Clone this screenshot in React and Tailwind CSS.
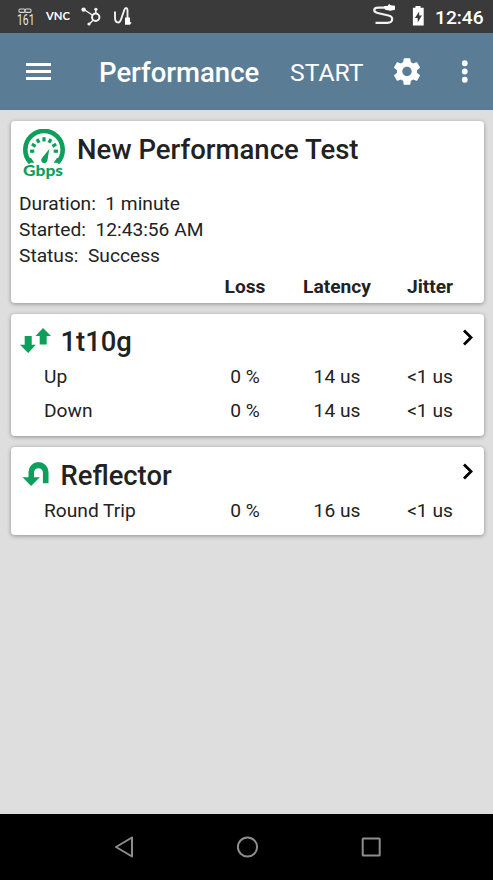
const GREEN = '#0d9f5b';

function StatusBar() {
  return (
    <div className="flex h-[33px] items-center bg-[#3a3a3a] pl-[16px] pr-[8px] text-white">
      <svg width="120" height="33" viewBox="0 0 120 33" fill="none">
        <g stroke="#d8d8d8" strokeWidth="1.1">
          <rect x="3" y="9" width="6" height="3.4" rx="1.2" />
          <rect x="9" y="9" width="6" height="3.4" rx="1.2" />
        </g>
        <text x="1" y="25" fontSize="14.5" fill="#e6e6e6" fontFamily="Roboto, sans-serif" fontWeight="400" textLength="17.5" lengthAdjust="spacingAndGlyphs">161</text>
        <text x="30" y="19.5" fontSize="11.5" fill="#ffffff" fontFamily="Lato, sans-serif" fontWeight="700" textLength="24" lengthAdjust="spacingAndGlyphs">VNC</text>
        <g stroke="#f2f2f2">
          <circle cx="79.7" cy="17.3" r="3.7" strokeWidth="2" />
          <path d="M68 9.5 77 15.5M79.8 9v5M76.8 20.5l-3.3 3.2" strokeWidth="1.5" />
        </g>
        <g fill="#f2f2f2">
          <circle cx="67.6" cy="9.6" r="2.2" />
          <circle cx="79.9" cy="9.3" r="1.6" />
          <circle cx="73" cy="24" r="1.6" />
        </g>
        <path d="M99 11.500v6c0 6 4.500 6.500 6 2l3.300-9.500c1-2.800 3.200-2.500 3.200.5V18" stroke="#f2f2f2" strokeWidth="1.9" />
        <path d="M109 17.500h5v4.500l1.600.5-1.600 2.300h-5z" fill="#fff" />
      </svg>
      <div className="grow" />
      <svg width="56" height="33" viewBox="0 0 56 33" fill="none">
        <path d="M17 7.700H6.500c-5.500 0-5.500 4.300-1 5.300l11 2.500c5.500 1.300 4.500 7.300-1 7.300H3.500" stroke="#f2f2f2" strokeWidth="2.200" />
        <path d="M12 6h3.500l1.500-2 1.700 1.300 4.300.5v4l-4.500.9-5.500-1z" fill="#fff" />
        <path d="M43.500 6h5v1.800h3.200v17.700H40.900V7.800h2.600z" fill="#fff" />
        <path d="M47.200 11.500 42.900 18h2.800v4.500l4.200-7h-2.700z" fill="#3a3a3a" />
      </svg>
      <span className="ml-[7px] mt-[2px] w-[50px] whitespace-nowrap text-[19.2px] font-medium leading-none">12:46</span>
    </div>
  );
}

function AppBar() {
  return (
    <header className="flex h-[77px] items-center bg-[#5b7c95] text-white">
      <div className="ml-[26px] flex w-[25px] flex-col gap-[4px]">
        <span className="h-[3px] bg-white" />
        <span className="h-[3px] bg-white" />
        <span className="h-[3px] bg-white" />
      </div>
      <h1 className="ml-[48px] mt-[3px] w-[191px] whitespace-nowrap text-[27.5px] font-medium leading-none">Performance</h1>
      <span className="mt-[3px] w-[101px] whitespace-nowrap text-[24.66px] leading-none">START</span>
      <svg width="32" height="33" viewBox="0 0 24 24" fill="currentColor">
        <path d="M19.43 12.98c.04-.32.07-.64.07-.98s-.03-.66-.07-.98l2.11-1.65c.19-.15.24-.42.12-.64l-2-3.46c-.12-.22-.39-.3-.61-.22l-2.49 1c-.52-.4-1.08-.73-1.69-.98l-.38-2.65C14.46 2.18 14.25 2 14 2h-4c-.25 0-.46.18-.49.42l-.38 2.65c-.61.25-1.17.59-1.69.98l-2.49-1c-.23-.09-.49 0-.61.22l-2 3.46c-.13.22-.07.49.12.64l2.11 1.65c-.04.32-.07.65-.07.98s.03.66.07.98l-2.11 1.65c-.19.15-.24.42-.12.64l2 3.46c.12.22.39.3.61.22l2.49-1c.52.4 1.08.73 1.69.98l.38 2.65c.03.24.24.42.49.42h4c.25 0 .46-.18.49-.42l.38-2.65c.61-.25 1.17-.59 1.69-.98l2.49 1c.23.09.49 0 .61-.22l2-3.46c.12-.22.07-.49-.12-.64zM12 15.5c-1.93 0-3.5-1.57-3.5-3.5s1.57-3.5 3.5-3.5 3.5 1.57 3.5 3.5-1.57 3.5-3.5 3.5z" />
      </svg>
      <svg className="ml-[25px]" width="33" height="33" viewBox="0 0 24 24" fill="currentColor">
        <circle cx="12.2" cy="6" r="2.1" />
        <circle cx="12.2" cy="12" r="2.1" />
        <circle cx="12.2" cy="18" r="2.1" />
      </svg>
    </header>
  );
}

function GaugeIcon() {
  return (
    <svg className="mt-[10px]" width="44" height="52" viewBox="0 0 44 52" fill="none">
      <path d="M8.600 34A18.700 18.700 0 1 1 35.400 34" transform="translate(0 -.3)" stroke={GREEN} strokeWidth="4.600" />
      <path d="M3.500 29 6 33.800h6.400L9 29zM40.500 29 38 33.800h-6.400L35 29z" fill={GREEN} />
      <g stroke={GREEN} strokeWidth="3.200">
        <path d="M8 22.200h4.300" />
        <path d="M8 22.200h4.300" transform="rotate(30 22 22.200)" />
        <path d="M8 22.200h4.300" transform="rotate(60 22 22.200)" />
        <path d="M8 22.200h4.300" transform="rotate(90 22 22.200)" />
        <path d="M8 22.200h4.300" transform="rotate(120 22 22.200)" />
        <path d="M8 22.200h4.300" transform="rotate(150 22 22.200)" />
        <path d="M8 22.200h4.300" transform="rotate(180 22 22.200)" />
      </g>
      <path d="M27.300 20 25.400 31.500a3.100 3.100 0 1 1-5.600-2.200z" fill={GREEN} />
      <text x="1" y="46.800" fontSize="15.800" fontWeight="900" fill={GREEN} fontFamily="Lato, sans-serif" textLength="40" lengthAdjust="spacingAndGlyphs">Gbps</text>
    </svg>
  );
}

function UpDownIcon() {
  return (
    <svg className="-mt-[4px] -ml-px mr-px" width="31" height="25" viewBox="0 0 31 25" fill={GREEN}>
      <path d="M4.7 8h7v8.700h4.100L8.200 25 0 16.700h4.700z" />
      <path d="M23 0l8 8h-4.300v8.500h-7V8h-4.200z" />
    </svg>
  );
}

function LoopIcon() {
  return (
    <svg className="-mt-[2px] -ml-px mr-px" width="31" height="25" viewBox="0 0 31 25">
      <path d="M2.500 15.200h6V10a10 10 0 0 1 20 0v11.300h-5.600V10a4.500 4.500 0 0 0-8.900 0v5.200h5.800L11.100 24z" fill={GREEN} />
    </svg>
  );
}

function Card({ children, className = '' }) {
  return (
    <section className={`rounded-[4px] bg-white shadow-[0_1px_4px_rgba(0,0,0,0.36)] ${className}`}>
      {children}
    </section>
  );
}

function Row({ label, cells, className = '' }) {
  return (
    <div className={`grid grid-cols-[1fr_92px_92px_94px] items-center pl-[33px] pr-[7px] text-center ${className}`}>
      <span className="text-left">{label}</span>
      {cells.map((c, i) => (
        <span key={i} className="whitespace-nowrap">{c}</span>
      ))}
    </div>
  );
}

function ResultCard({ icon, title, rows, className }) {
  return (
    <Card className={className}>
      <div className="flex h-[37px] items-center pl-[10px] pr-[11px]">
        {icon}
        <h2 className="ml-[8.5px] mt-[1px] grow text-[27.4px] font-medium leading-[37px]">{title}</h2>
        <svg className="-mt-[9px]" width="11" height="17" viewBox="0 0 11 17" fill="none">
          <path d="M2 1.5 9 8.500l-7 7" stroke="#000" strokeWidth="2.800" />
        </svg>
      </div>
      {rows.map((r) => (
        <Row key={r[0]} label={r[0]} cells={r.slice(1)} className="h-[34px]" />
      ))}
    </Card>
  );
}

export default function App() {
  return (
    <div className="flex h-[880px] w-[493px] flex-col overflow-hidden bg-[#dedede] font-[Roboto,sans-serif] text-[19.18px] text-[#222]">
      <StatusBar />
      <AppBar />
      <main className="flex grow flex-col pl-[11px] pr-[9px] pt-[11px]">
        <Card className="h-[181.5px]">
          <div className="flex h-[57px] items-center pl-[11px]">
            <GaugeIcon />
            <h2 className="ml-[11px] mt-[1px] whitespace-nowrap text-[27.5px] font-medium leading-none">New Performance Test</h2>
          </div>
          <div className="whitespace-pre pl-[8px] pt-[13px] leading-[26.2px]">
            <p>{'Duration:  1 minute'}</p>
            <p>{'Started:  12:43:56 AM'}</p>
            <p>{'Status:  Success'}</p>
          </div>
          <Row label="" cells={['Loss', 'Latency', 'Jitter']} className="mt-[1.4px] h-[32px] font-bold" />
        </Card>
        <ResultCard
          className="mt-[11px] h-[122.5px] pt-[10px]"
          icon={<UpDownIcon />}
          title="1t10g"
          rows={[['Up', '0 %', '14 us', '<1 us'], ['Down', '0 %', '14 us', '<1 us']]}
        />
        <ResultCard
          className="mt-[11px] h-[88px] pt-[10px]"
          icon={<LoopIcon />}
          title="Reflector"
          rows={[['Round Trip', '0 %', '16 us', '<1 us']]}
        />
      </main>
      <nav className="flex h-[66px] items-center bg-black pl-[114px]">
        <svg width="270" height="24" viewBox="0 0 270 24" fill="none" stroke="#8d8d8d" strokeWidth="2" strokeLinejoin="round">
          <path d="M2 12 18 2.500v19z" />
          <circle cx="133.5" cy="12" r="9.600" />
          <rect x="248.700" y="3.500" width="17" height="17" rx=".5" />
        </svg>
      </nav>
    </div>
  );
}
